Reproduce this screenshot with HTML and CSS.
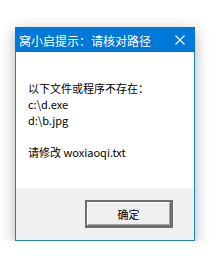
FILE: index.html
```html
<!DOCTYPE html>
<html lang="zh-CN">
<head>
  <meta charset="UTF-8" />
  <title>窝小启提示</title>
  <link rel="stylesheet" href="styles.css">
</head>
<body>
  <div class="janela">
    <div class="titulo">
      <span>窝小启提示：请核对路径</span>
      <svg class="fechar" width="10" height="10" viewBox="0 0 10 10">
        <path d="M0.5 0.5 L9.5 9.5 M9.5 0.5 L0.5 9.5" stroke="#fff" stroke-width="1.1" fill="none"/>
      </svg>
    </div>
    <div class="conteudo">
      <p>以下文件或程序不存在：</p>
      <p>c:\d.exe</p>
      <p>d:\b.jpg</p>
      <p>&nbsp;</p>
      <p>请修改 woxiaoqi.txt</p>
    </div>
    <div class="rodape">
      <button class="botao">确定</button>
    </div>
  </div>
</body>
</html>
```

FILE: styles.css
```css
body {
  margin: 0;
  background: #fff;
  font-family: "Noto Sans CJK SC", "Noto Sans", sans-serif;
}
.janela {
  box-sizing: border-box;
  width: 180px;
  height: 214px;
  margin: 27px 0 0 15px;
  border: 1px solid #1883d7;
  background: #fff;
  display: flex;
  flex-direction: column;
  box-shadow: 0 4px 14px rgba(0, 0, 0, 0.3);
}
.titulo {
  height: 24px;
  background: #0078d7;
  color: #fff;
  font-size: 12px;
  display: flex;
  align-items: center;
  justify-content: space-between;
  padding: 0 10px 0 4px;
  margin: -1px -1px 0 -1px;
  padding-top: 1px;
}
.conteudo {
  height: 136px;
  box-sizing: border-box;
  padding: 28px 0 0 12px;
  font-size: 11px;
  line-height: 16px;
  color: #000;
}
.conteudo p {
  margin: 0;
}
.rodape {
  flex: 1;
  background: #f0f0f0;
  display: flex;
  justify-content: flex-end;
  align-items: flex-start;
  padding: 12px 21px 0 0;
}
.botao {
  box-sizing: border-box;
  width: 88px;
  height: 28px;
  background: #efefef;
  border-style: solid;
  border-color: #6e6e6e;
  border-width: 2px 3px 3px 2px;
  box-shadow: inset 1px 1px #fff, inset -1px -1px #a6a6a6;
  font-family: "Noto Sans CJK SC", sans-serif;
  font-size: 11px;
  color: #000;
  padding: 0;
}
```
